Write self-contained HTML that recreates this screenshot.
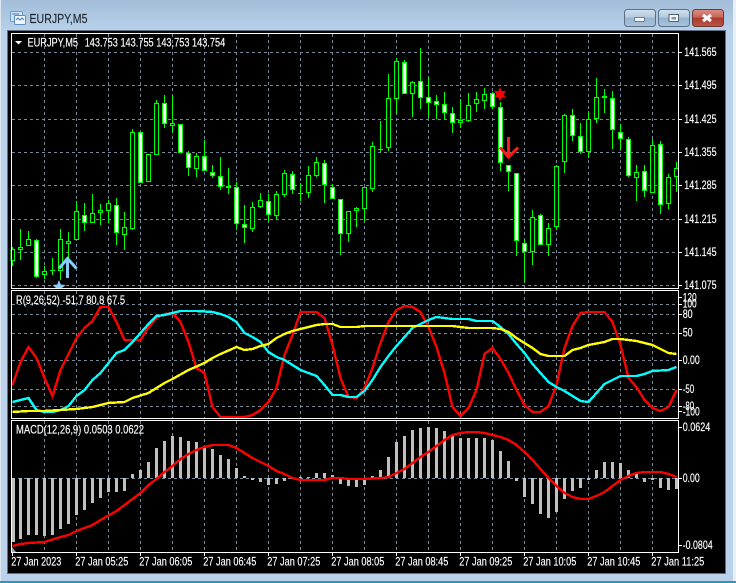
<!DOCTYPE html>
<html><head><meta charset="utf-8"><title>EURJPY,M5</title>
<style>
html,body{margin:0;padding:0;width:736px;height:583px;overflow:hidden;background:#b9d1ea}
svg{display:block}
text{font-family:"Liberation Sans",sans-serif;fill:#fff;font-size:12px;stroke:#fff;stroke-width:.15}
.c{shape-rendering:crispEdges}
</style></head><body>
<svg width="736" height="583" viewBox="0 0 736 583" xmlns="http://www.w3.org/2000/svg">
<defs>
<linearGradient id="tb" x1="0" y1="0" x2="0" y2="1"><stop offset="0" stop-color="#a3bdd8"/><stop offset="1" stop-color="#b9d1ea"/></linearGradient>
<linearGradient id="bt" x1="0" y1="0" x2="0" y2="1"><stop offset="0" stop-color="#d3e1ef"/><stop offset=".45" stop-color="#b4c9de"/><stop offset=".5" stop-color="#98b3cf"/><stop offset="1" stop-color="#a9c3dc"/></linearGradient>
<linearGradient id="cl" x1="0" y1="0" x2="0" y2="1"><stop offset="0" stop-color="#d98f82"/><stop offset=".45" stop-color="#c9665a"/><stop offset=".5" stop-color="#a93a2c"/><stop offset="1" stop-color="#bd5546"/></linearGradient>
</defs>
<rect width="736" height="583" fill="#b9d1ea"/>
<rect width="736" height="31" fill="url(#tb)"/>
<rect x="0" y="0" width="1" height="583" fill="#dfe8f1"/>
<rect x="733" y="0" width="3" height="583" fill="#e9f0f6"/>
<rect x="0" y="581" width="736" height="2" fill="#1b9fbd"/>
<rect x="7.5" y="30.5" width="718" height="543" fill="#000" stroke="#5d6f80"/>

<!-- title icon -->
<rect x="10.5" y="11.5" width="12" height="10" rx="1" fill="#cfe2f5" stroke="#6f9cc9"/>
<rect x="14.5" y="15.5" width="11" height="9" rx="1" fill="#eef5fb" stroke="#5f8fc0"/>
<path d="M12 14h7M16 20l2-2 2 2 2-2 2 2" fill="none" stroke="#4a7fb5"/>
<text x="29.5" y="23" textLength="58" lengthAdjust="spacingAndGlyphs" style="font-size:13px;fill:#1e2730;stroke:#1e2730">EURJPY,M5</text>

<!-- window buttons -->
<rect x="624.5" y="9.5" width="31" height="17" rx="3" fill="url(#bt)" stroke="#5a6f88"/>
<rect x="634.5" y="17.5" width="10" height="4" rx="1" fill="#f4f7fa" stroke="#4f6274" stroke-width=".7"/>
<rect x="658.5" y="9.5" width="31" height="17" rx="3" fill="url(#bt)" stroke="#5a6f88"/>
<rect x="669" y="14.5" width="9.5" height="7" fill="#f4f7fa" stroke="#4f6274"/>
<rect x="671.5" y="17" width="4.5" height="2.5" fill="#7f97ad"/>
<rect x="692.5" y="9.5" width="31" height="17" rx="3" fill="url(#cl)" stroke="#6b3a36"/>
<path d="M703 15l8 6M711 15l-8 6" stroke="#fff" stroke-width="3" fill="none"/>

<!-- grid -->
<path class="c" stroke="#778899" stroke-width="1" stroke-dasharray="3 3" fill="none" d="M12 52.5H678M12 85.5H678M12 119.5H678M12 152.5H678M12 185.5H678M12 219.5H678M12 252.5H678M12 285.5H678
M12 304.5H678M12 314.5H678M12 333.5H678M12 360.5H678M12 389.5H678M12 406.5H678
M12 478.5H678
M44.5 34V288M76.5 34V288M108.5 34V288M140.5 34V288M172.5 34V288M204.5 34V288M236.5 34V288M268.5 34V288M300.5 34V288M332.5 34V288M364.5 34V288M396.5 34V288M428.5 34V288M460.5 34V288M492.5 34V288M524.5 34V288M556.5 34V288M588.5 34V288M620.5 34V288M652.5 34V288
M44.5 291V418M76.5 291V418M108.5 291V418M140.5 291V418M172.5 291V418M204.5 291V418M236.5 291V418M268.5 291V418M300.5 291V418M332.5 291V418M364.5 291V418M396.5 291V418M428.5 291V418M460.5 291V418M492.5 291V418M524.5 291V418M556.5 291V418M588.5 291V418M620.5 291V418M652.5 291V418
M44.5 421V552M76.5 421V552M108.5 421V552M140.5 421V552M172.5 421V552M204.5 421V552M236.5 421V552M268.5 421V552M300.5 421V552M332.5 421V552M364.5 421V552M396.5 421V552M428.5 421V552M460.5 421V552M492.5 421V552M524.5 421V552M556.5 421V552M588.5 421V552M620.5 421V552M652.5 421V552"/>

<!-- wicks -->
<path class="c" stroke="#00ff00" stroke-width="1" fill="none" d="M12.5 247V266M20.5 229V260M28.5 231V246M36.5 239V278M44.5 266V279M52.5 258V275M60.5 229V280M68.5 232V263M76.5 201V240M84.5 203V231M92.5 194V223M100.5 204V225M108.5 200V223M116.5 198V245M124.5 212V250M132.5 129V230M140.5 132V183M148.5 154V182M156.5 100V155M164.5 95V128M172.5 95V133M180.5 124V153M188.5 151V176M196.5 153V177M204.5 140V171M212.5 165V178M220.5 157V190M228.5 168V194M236.5 182V230M244.5 205V243M252.5 202V232M260.5 193V208M268.5 194V222M276.5 191V219M284.5 170V197M292.5 171V194M300.5 183V201M308.5 166V198M316.5 157V177M324.5 160V203M332.5 184V199M340.5 199V255M348.5 211V242M356.5 207V227M364.5 187V222M372.5 142V192M380.5 121V152M388.5 74V151M396.5 58V114M404.5 60V94M412.5 81V117M420.5 48V109M428.5 77V118M436.5 95V119M444.5 92V119M452.5 107V133M460.5 99V128M468.5 93V122M476.5 92V112M484.5 88V109M492.5 92V109M500.5 102V171M508.5 165V191M516.5 173V256M524.5 239V282M532.5 210V265M540.5 214V245M548.5 223V256M556.5 165V230M564.5 114V173M572.5 109V141M580.5 123V154M588.5 111V158M596.5 78V123M604.5 89V113M612.5 91V149M620.5 124V149M628.5 137V177M636.5 165V201M644.5 165V197M652.5 139V193M660.5 141V214M668.5 174V209M676.5 162V192
M50 270.5h5M298 193.5h5M378 149.5h5"/>

<!-- bull candles: hollow -->
<path class="c" stroke="#00ff00" stroke-width="1" fill="#000" d="M11 249.5h3.5V260.5h-3.5zM18.5 247.5h4V249.5h-4zM26.5 239.5h4V245.5h-4zM42.5 271.5h4V274.5h-4zM58.5 239.5h4V270.5h-4zM66.5 241.5h4V243.5h-4zM74.5 211.5h4V239.5h-4zM90.5 213.5h4V222.5h-4zM98.5 210.5h4V212.5h-4zM106.5 203.5h4V210.5h-4zM122.5 227.5h4V234.5h-4zM130.5 132.5h4V228.5h-4zM146.5 154.5h4V181.5h-4zM154.5 103.5h4V154.5h-4zM170.5 123.5h4V125.5h-4zM194.5 156.5h4V168.5h-4zM250.5 207.5h4V228.5h-4zM258.5 200.5h4V206.5h-4zM274.5 194.5h4V215.5h-4zM282.5 173.5h4V194.5h-4zM306.5 175.5h4V192.5h-4zM314.5 162.5h4V175.5h-4zM346.5 211.5h4V233.5h-4zM354.5 208.5h4V210.5h-4zM362.5 187.5h4V208.5h-4zM370.5 146.5h4V188.5h-4zM386.5 98.5h4V147.5h-4zM394.5 61.5h4V98.5h-4zM410.5 82.5h4V93.5h-4zM458.5 120.5h4V122.5h-4zM466.5 105.5h4V120.5h-4zM474.5 99.5h4V103.5h-4zM482.5 94.5h4V100.5h-4zM530.5 217.5h4V251.5h-4zM546.5 228.5h4V244.5h-4zM554.5 166.5h4V226.5h-4zM562.5 115.5h4V161.5h-4zM586.5 119.5h4V151.5h-4zM594.5 97.5h4V118.5h-4zM634.5 172.5h4V177.5h-4zM650.5 145.5h4V192.5h-4zM666.5 177.5h4V203.5h-4zM674.5 168.5h4V176.5h-4z"/>

<!-- bear candles: white -->
<path class="c" stroke="#00ff00" stroke-width="1" fill="#fff" d="M34.5 240.5h4V276.5h-4zM82.5 215.5h4V222.5h-4zM114.5 205.5h4V232.5h-4zM138.5 132.5h4V182.5h-4zM162.5 103.5h4V123.5h-4zM178.5 124.5h4V152.5h-4zM186.5 153.5h4V167.5h-4zM202.5 156.5h4V170.5h-4zM210.5 172.5h4V175.5h-4zM218.5 176.5h4V186.5h-4zM226.5 186.5h4V187.5h-4zM234.5 187.5h4V223.5h-4zM242.5 224.5h4V227.5h-4zM266.5 201.5h4V214.5h-4zM290.5 174.5h4V189.5h-4zM322.5 163.5h4V184.5h-4zM330.5 187.5h4V198.5h-4zM338.5 199.5h4V233.5h-4zM402.5 62.5h4V93.5h-4zM418.5 81.5h4V97.5h-4zM426.5 97.5h4V102.5h-4zM434.5 101.5h4V104.5h-4zM442.5 104.5h4V112.5h-4zM450.5 113.5h4V122.5h-4zM490.5 93.5h4V106.5h-4zM498.5 107.5h4V162.5h-4zM506.5 165.5h4V171.5h-4zM514.5 173.5h4V240.5h-4zM522.5 243.5h4V251.5h-4zM538.5 215.5h4V244.5h-4zM570.5 115.5h4V135.5h-4zM578.5 136.5h4V151.5h-4zM602.5 96.5h4V97.5h-4zM610.5 98.5h4V129.5h-4zM618.5 132.5h4V138.5h-4zM626.5 139.5h4V175.5h-4zM642.5 171.5h4V190.5h-4zM658.5 144.5h4V204.5h-4z"/>

<!-- signal objects -->
<path d="M67.5 278V258.5M59 268.5L67.5 258.5L76.5 268.5" fill="none" stroke="#87cefa" stroke-width="3"/>
<polygon points="59,280 60.8,284.5 65.7,285 62,288 56,288 52.5,285 57.2,284.5" fill="#87cefa"/>
<path d="M508.5 137V157M500 147.5L508.5 157L518 147.5" fill="none" stroke="#ff1a1a" stroke-width="3"/>
<polygon points="500,87.3 501.75,91.3 506.06,90.8 503.5,94.3 506.06,97.8 501.75,97.3 500,101.3 498.25,97.3 493.94,97.8 496.5,94.3 493.94,90.8 498.25,91.3" fill="#ff0000"/>

<!-- indicator lines pane 2 -->
<polyline class="c" fill="none" stroke="#ff0000" stroke-width="2.4" points="12.5,385 20.5,362 28.5,347 36.5,358 44.5,378 52.5,396 60.5,370 68.5,354 76.5,338 84.5,328 92.5,321 100.5,307 108.5,307 116.5,322 124.5,340 140.5,340 148.5,327 156.5,318 164.5,314 172.5,313 180.5,322 188.5,342 196.5,368 204.5,373 212.5,407 220.5,417 244.5,417 252.5,415 260.5,410 268.5,402 276.5,388 284.5,355 292.5,335 300.5,312 316.5,312 324.5,318 332.5,345 340.5,378 348.5,397 356.5,398 364.5,388 372.5,368 380.5,343 388.5,322 396.5,310 404.5,306 412.5,307 420.5,312 428.5,327 436.5,347 444.5,373 452.5,407 460.5,416 468.5,408 476.5,390 484.5,354 492.5,348 500.5,359 508.5,373 516.5,390 524.5,405 532.5,412 540.5,412 548.5,406 556.5,385 564.5,348 572.5,326 580.5,313 588.5,312 604.5,312 612.5,322 620.5,345 628.5,378 636.5,387 644.5,400 652.5,408 660.5,411 668.5,407 676.5,390"/>
<polyline class="c" fill="none" stroke="#00ffff" stroke-width="2.4" points="12.5,402 20.5,400 28.5,398 36.5,410 44.5,412 52.5,412 60.5,410 68.5,406 76.5,396 84.5,390 92.5,380 100.5,373 108.5,363 116.5,353 124.5,350 132.5,342 140.5,333 148.5,324 156.5,316 164.5,315 172.5,313 180.5,311 196.5,311 212.5,312 220.5,314 228.5,317 236.5,322 244.5,333 252.5,337 260.5,342 268.5,352 276.5,357 284.5,360 292.5,365 300.5,370 308.5,373 316.5,376 324.5,385 332.5,395 340.5,395 348.5,397 356.5,397 364.5,391 372.5,380 380.5,367 388.5,356 396.5,346 404.5,337 412.5,328 420.5,324 428.5,320 436.5,317 444.5,318 452.5,319 468.5,319 476.5,321 492.5,321 500.5,327 508.5,334 516.5,344 524.5,353 532.5,364 540.5,373 548.5,382 556.5,387 564.5,391 572.5,396 580.5,401 588.5,402 596.5,393 604.5,384 612.5,380 620.5,376 636.5,376 644.5,374 652.5,371 668.5,370 676.5,367"/>
<polyline class="c" fill="none" stroke="#ffff00" stroke-width="2.4" points="12.5,412 28.5,411 44.5,411 60.5,410 76.5,409 92.5,407 108.5,403 124.5,402 132.5,398 148.5,393 156.5,388 164.5,383 172.5,379 188.5,370 204.5,363 212.5,358 220.5,354 236.5,347 244.5,350 252.5,349 260.5,346 268.5,344 276.5,338 284.5,334 292.5,331 300.5,329 316.5,325 324.5,324 332.5,324 340.5,327 356.5,327 364.5,326 452.5,326 460.5,327 468.5,328 492.5,328 500.5,329 508.5,332 516.5,338 524.5,343 532.5,348 540.5,354 548.5,356 564.5,356 572.5,350 580.5,348 588.5,345 604.5,342 612.5,339 620.5,339 636.5,341 652.5,345 660.5,349 668.5,353 676.5,354"/>

<!-- MACD histogram -->
<path class="c" stroke="#c0c0c0" stroke-width="3" fill="none" d="M13.5 478V542M20.5 478V539M28.5 478V535M36.5 478V535M44.5 478V536M52.5 478V535M60.5 478V529M68.5 478V524M76.5 478V515M84.5 478V510M92.5 478V503M100.5 478V498M108.5 478V492M116.5 478V492M124.5 478V491M132.5 478V474M140.5 478V470M148.5 478V462M156.5 478V448M164.5 478V441M172.5 478V436M180.5 478V437M188.5 478V441M196.5 478V442M204.5 478V446M212.5 478V449M220.5 478V455M228.5 478V459M236.5 478V468M244.5 478V476M252.5 478V480M260.5 478V482M268.5 478V485M276.5 478V484M284.5 478V481M292.5 478V479M300.5 478V477M308.5 478V477M316.5 478V473M324.5 478V473M332.5 478V475M340.5 478V484M348.5 478V486M356.5 478V487M364.5 478V485M372.5 478V476M380.5 478V470M388.5 478V457M396.5 478V442M404.5 478V436M412.5 478V430M420.5 478V428M428.5 478V427M436.5 478V428M444.5 478V431M452.5 478V435M460.5 478V438M468.5 478V438M476.5 478V438M484.5 478V438M492.5 478V440M500.5 478V451M508.5 478V461M516.5 478V481M524.5 478V497M532.5 478V504M540.5 478V514M548.5 478V518M556.5 478V512M564.5 478V499M572.5 478V491M580.5 478V488M588.5 478V480M596.5 478V470M604.5 478V462M612.5 478V462M620.5 478V463M628.5 478V470M636.5 478V474M644.5 478V482M652.5 478V480M660.5 478V488M668.5 478V490M676.5 478V489"/>
<polygon points="12,547 16,552 12,552" fill="#9aa3ad"/>
<polyline class="c" fill="none" stroke="#ff0000" stroke-width="2.4" points="12.5,546 20.5,544 28.5,543 44.5,542 60.5,537 68.5,535 76.5,531 92.5,525 100.5,520 116.5,511 124.5,505 132.5,499 140.5,493 148.5,485 156.5,479 164.5,472 172.5,466 180.5,459 188.5,454 196.5,450 204.5,447 212.5,445 220.5,445 228.5,445 236.5,448 244.5,453 252.5,458 260.5,462 268.5,466 276.5,471 284.5,474 292.5,478 300.5,480 308.5,480 324.5,480 332.5,478 340.5,478 348.5,479 364.5,479 380.5,478 388.5,477 396.5,473 404.5,469 412.5,463 420.5,457 428.5,452 436.5,446 444.5,440 452.5,435 460.5,433 468.5,432 476.5,432 484.5,433 492.5,435 500.5,437 508.5,440 516.5,445 524.5,452 532.5,460 540.5,469 548.5,478 556.5,486 564.5,493 572.5,497 580.5,499 588.5,499 596.5,496 604.5,492 612.5,486 620.5,480 628.5,476 636.5,473 644.5,472 652.5,472 660.5,472 668.5,474 676.5,477"/>

<!-- frames -->
<path class="c" fill="none" stroke="#fff" stroke-width="1" d="M11.5 33.5H678.5V288.5H11.5ZM11.5 290.5H678.5V418.5H11.5ZM11.5 420.5H678.5V552.5H11.5Z
M678 52.5h4M678 85.5h4M678 119.5h4M678 152.5h4M678 185.5h4M678 219.5h4M678 252.5h4M678 285.5h4
M678 304.5h4M678 314.5h4M678 333.5h4M678 360.5h4M678 389.5h4M678 406.5h4M678 297.5h4M678 411.5h4
M678 427.5h4M678 478.5h4M678 545.5h4
M12.5 552v4M76.5 552v4M140.5 552v4M204.5 552v4M268.5 552v4M332.5 552v4M396.5 552v4M460.5 552v4M524.5 552v4M588.5 552v4M652.5 552v4"/>

<!-- legends -->
<polygon points="15,41 22,41 18.5,44.5" fill="#fff"/>
<text x="27.5" y="46.5" textLength="50.5" lengthAdjust="spacingAndGlyphs">EURJPY,M5</text>
<text x="84.7" y="46.5" textLength="140.5" lengthAdjust="spacingAndGlyphs">143.753 143.755 143.753 143.754</text>
<text x="16" y="304" textLength="109" lengthAdjust="spacingAndGlyphs">R(9,26,52) -51.7 80.8 67.5</text>
<text x="16" y="433.5" textLength="128" lengthAdjust="spacingAndGlyphs">MACD(12,26,9) 0.0503 0.0622</text>

<!-- price axis -->
<g>
<text x="684.3" y="56" textLength="32.3" lengthAdjust="spacingAndGlyphs">141.565</text>
<text x="684.3" y="89" textLength="32.3" lengthAdjust="spacingAndGlyphs">141.495</text>
<text x="684.3" y="123" textLength="32.3" lengthAdjust="spacingAndGlyphs">141.425</text>
<text x="684.3" y="156" textLength="32.3" lengthAdjust="spacingAndGlyphs">141.355</text>
<text x="684.3" y="189" textLength="32.3" lengthAdjust="spacingAndGlyphs">141.285</text>
<text x="684.3" y="223" textLength="32.3" lengthAdjust="spacingAndGlyphs">141.215</text>
<text x="684.3" y="256" textLength="32.3" lengthAdjust="spacingAndGlyphs">141.145</text>
<text x="684.3" y="289" textLength="32.3" lengthAdjust="spacingAndGlyphs">141.075</text>
<text x="682.7" y="301.5" textLength="14" lengthAdjust="spacingAndGlyphs">120</text>
<text x="682.7" y="307.5" textLength="14" lengthAdjust="spacingAndGlyphs">100</text>
<text x="682.7" y="318" textLength="10" lengthAdjust="spacingAndGlyphs">80</text>
<text x="682.7" y="336.5" textLength="10" lengthAdjust="spacingAndGlyphs">50</text>
<text x="682.7" y="364" textLength="17" lengthAdjust="spacingAndGlyphs">0.00</text>
<text x="682.7" y="393" textLength="11.5" lengthAdjust="spacingAndGlyphs">-50</text>
<text x="682.7" y="410" textLength="11.5" lengthAdjust="spacingAndGlyphs">-80</text>
<text x="682.7" y="415.5" textLength="17" lengthAdjust="spacingAndGlyphs">-100</text>
<text x="682.7" y="431" textLength="27.5" lengthAdjust="spacingAndGlyphs">0.0624</text>
<text x="682.7" y="482" textLength="17" lengthAdjust="spacingAndGlyphs">0.00</text>
<text x="682.7" y="549" textLength="30" lengthAdjust="spacingAndGlyphs">-0.0804</text>
</g>

<!-- time axis -->
<g>
<text x="11.3" y="565.5" textLength="50" lengthAdjust="spacingAndGlyphs">27 Jan 2023</text>
<text x="75.3" y="565.5" textLength="53" lengthAdjust="spacingAndGlyphs">27 Jan 05:25</text>
<text x="139.3" y="565.5" textLength="53" lengthAdjust="spacingAndGlyphs">27 Jan 06:05</text>
<text x="203.3" y="565.5" textLength="53" lengthAdjust="spacingAndGlyphs">27 Jan 06:45</text>
<text x="267.3" y="565.5" textLength="53" lengthAdjust="spacingAndGlyphs">27 Jan 07:25</text>
<text x="331.3" y="565.5" textLength="53" lengthAdjust="spacingAndGlyphs">27 Jan 08:05</text>
<text x="395.3" y="565.5" textLength="53" lengthAdjust="spacingAndGlyphs">27 Jan 08:45</text>
<text x="459.3" y="565.5" textLength="53" lengthAdjust="spacingAndGlyphs">27 Jan 09:25</text>
<text x="523.3" y="565.5" textLength="53" lengthAdjust="spacingAndGlyphs">27 Jan 10:05</text>
<text x="587.3" y="565.5" textLength="53" lengthAdjust="spacingAndGlyphs">27 Jan 10:45</text>
<text x="651.3" y="565.5" textLength="53" lengthAdjust="spacingAndGlyphs">27 Jan 11:25</text>
</g>
</svg>
</body></html>
